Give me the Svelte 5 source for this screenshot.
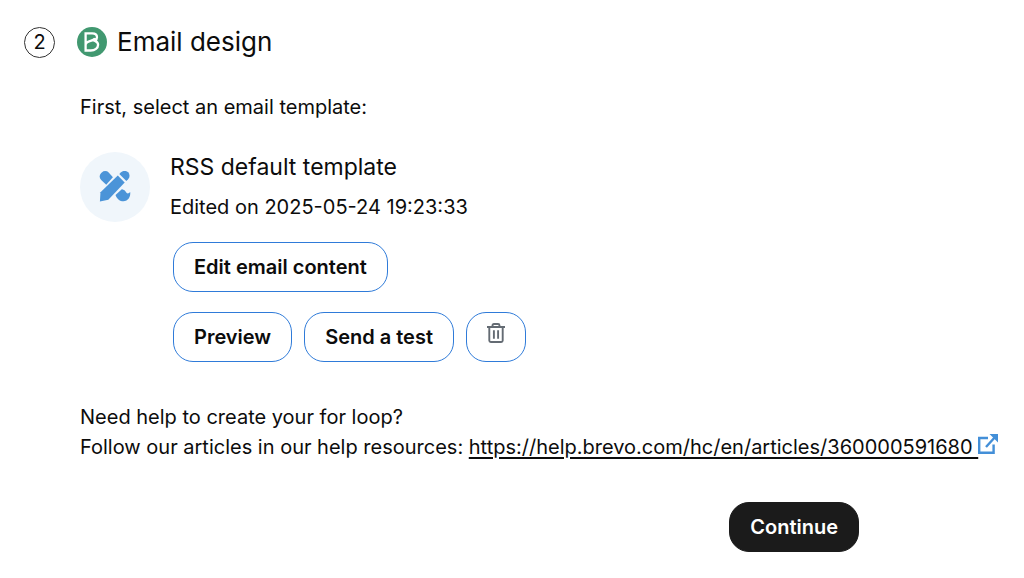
<script>
  const template = { name: 'RSS default template', edited: '2025-05-24 19:23:33' };
  const helpUrl = 'https://help.brevo.com/hc/en/articles/360000591680';
</script>

<main>
  <header>
    <span class="step">2</span>
    <svg class="brand" viewBox="0 0 30 30" aria-hidden="true">
      <circle cx="15" cy="15" r="15" fill="#419870" />
      <path
        d="M8.6 23.500V6.400h6.600c3 0 4.800 1.600 4.800 3.900 0 1.500-.8 2.700-2.100 3.500 2 .7 3.200 2.100 3.200 4 0 3.300-3.200 5.700-7.300 5.700zM8.600 17.400c.5-2 2-2.600 4.200-3.200 2.500-.7 4.700-1.300 5.300-3"
        fill="none"
        stroke="#fff"
        stroke-width="2.3"
      />
    </svg>
    <h1>Email design</h1>
  </header>

  <section class="body">
    <p>First, select an email template:</p>

    <div class="template">
      <span class="badge">
        <svg viewBox="0 1 32 32" fill="#4b94d8" aria-hidden="true">
          <path d="M2.200 9.900a5 5 0 0 1 0-6.800l.6-.6a5 5 0 0 1 6.900 0l4.200 4.700-6.700 7.500z" />
          <path d="M16.500 25l6.300-5.700c3.300.5 4 2.700 4.900 3.600 1 1 2.400.3 3.500-.8.600 5-2.200 9.200-6.800 9.200-3.400 0-6.400-2.200-7.900-6.300z" />
          <path d="M.9 31.400l.6-9.200L18.800 5.500l6.900 6.900L9.300 29.800z" />
          <path d="M20.300 4.100l1.800-1.800a5 5 0 0 1 7 0 5 5 0 0 1 0 7l-1.800 1.800z" />
        </svg>
      </span>
      <div class="details">
        <h2>{template.name}</h2>
        <p>Edited on {template.edited}</p>
        <div class="actions">
          <button type="button">Edit email content</button>
        </div>
        <div class="actions">
          <button type="button">Preview</button>
          <button type="button">Send a test</button>
          <button type="button" class="icon" aria-label="Delete template">
            <svg viewBox="0 0 18 20" fill="none" stroke="#646b73" stroke-width="1.900" aria-hidden="true">
              <path d="M0 4h18M5.500 4V2.500Q5.500 1 7 1h4q1.500 0 1.500 1.500V4M2.300 4v13.500q0 1.500 1.500 1.500h10.400q1.500 0 1.500-1.500V4M6.900 7.200v8.600M11.100 7.200v8.600" />
            </svg>
          </button>
        </div>
      </div>
    </div>

    <div class="help">
      <p>Need help to create your for loop?</p>
      <p>
        Follow our articles in our help resources:
        <a href={helpUrl}>{helpUrl}&nbsp;<svg viewBox="0 0 20 20" fill="none" stroke="#438fd8" stroke-width="2.400" aria-hidden="true">
          <path d="M10 4H1.200v14.800h14.400v-8.300M8 13L18 2" />
          <path d="M11.500 0H20v8.500z" fill="#438fd8" stroke="none" />
        </svg></a>
      </p>
    </div>
  </section>

  <footer>
    <button type="button" class="primary">Continue</button>
  </footer>
</main>

<style>
  :global(body) {
    margin: 0;
    background: #fff;
  }

  main {
    padding: 24px 16px 24px 24px;
    font-family: Inter, "Liberation Sans", sans-serif;
    font-size: 20px;
    line-height: 30px;
    color: #0c0c0c;
  }

  h1,
  h2,
  p {
    margin: 0;
    font-weight: 400;
  }

  header {
    display: flex;
    align-items: center;
  }

  .step {
    box-sizing: border-box;
    width: 31px;
    height: 31px;
    margin-right: 22px;
    border: 1px solid #333;
    border-radius: 50%;
    line-height: 29px;
    text-align: center;
  }

  .brand {
    width: 30px;
    height: 30px;
    margin-right: 10px;
  }

  h1 {
    font-size: 26px;
    line-height: 36px;
  }

  .body {
    padding: 32px 0 0 56px;
  }

  .template {
    display: flex;
    gap: 20px;
    margin-top: 30px;
  }

  .badge {
    display: flex;
    flex: none;
    align-items: center;
    justify-content: center;
    width: 70px;
    height: 70px;
    border-radius: 50%;
    background: #f0f6fb;
  }

  .badge svg {
    width: 32px;
    height: 32px;
  }

  h2 {
    margin-bottom: 10px;
    font-size: 23px;
    line-height: 30px;
  }

  .actions {
    display: flex;
    gap: 12px;
    margin: 20px 0 0 3px;
  }

  button {
    box-sizing: border-box;
    height: 50px;
    padding: 0 20px;
    border: 1px solid #2f7bd9;
    border-radius: 20px;
    background: #fff;
    color: #0c0c0c;
    font: inherit;
    font-weight: 600;
    cursor: pointer;
  }

  .icon {
    display: flex;
    justify-content: center;
    width: 60px;
    padding-top: 10px;
  }

  .icon svg {
    width: 18px;
    height: 20px;
  }

  .help {
    margin-top: 40px;
  }

  a {
    color: inherit;
    text-decoration-thickness: 2px;
    text-underline-offset: 3px;
  }

  a svg {
    width: 20px;
    height: 20px;
  }

  footer {
    display: flex;
    justify-content: flex-end;
    padding: 40px 149px 0 0;
  }

  .primary {
    border-color: #1b1b1b;
    background: #1b1b1b;
    color: #fff;
  }
</style>
